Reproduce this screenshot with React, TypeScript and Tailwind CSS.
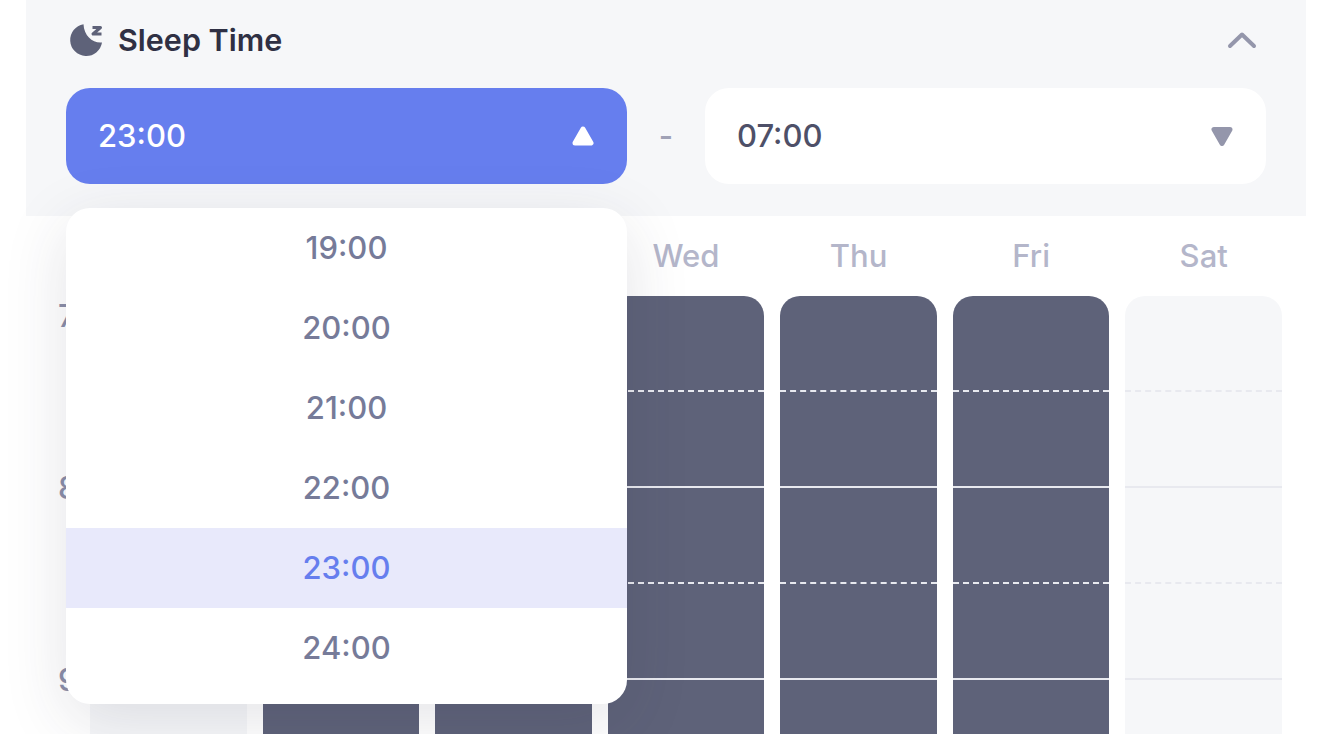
const days = ["Sun", "Mon", "Tue", "Wed", "Thu", "Fri", "Sat"];
const times = ["19:00", "20:00", "21:00", "22:00", "23:00", "24:00"];
const cells = [0, 1, 2, 3, 4];

function MoonIcon() {
  return (
    <svg width="34" height="34" viewBox="0 0 34 34" className="ml-[3px] mr-[15px] shrink-0">
      <path d="M14.5 1.2A16 16 0 1 0 33 19.5C24 20.5 15 13 14.5 1.2Z" fill="#5e6279" />
      <path
        d="M23.500 4.500H31.500L24 11H32.500"
        fill="none"
        stroke="#5e6279"
        strokeWidth="3"
        strokeLinejoin="round"
      />
    </svg>
  );
}

function Triangle({ up, color }: { up?: boolean; color: string }) {
  return (
    <svg width="24" height="20" viewBox="0 0 24 20" className={up ? "" : "rotate-180 translate-y-[0.5px]"}>
      <path d="M12 3L20 17H4Z" fill={color} stroke={color} strokeWidth="5" strokeLinejoin="round" />
    </svg>
  );
}

export default function App() {
  return (
    <div className="relative h-[734px] w-[1326px] overflow-hidden bg-white pl-[26px] pr-[20px] font-['Inter',sans-serif]">
      <section className="h-[216px] bg-[#f6f7f9] px-[40px]">
        <div className="flex h-[88px] items-center pb-[8px]">
          <MoonIcon />
          <h2 className="text-[30.500px] font-semibold text-[#2f3044]">Sleep Time</h2>
          <svg width="32" height="20" viewBox="0 0 32 20" className="ml-auto mr-[8px]">
            <path
              d="M4 16L16 4.500L28 16"
              fill="none"
              stroke="#9496ab"
              strokeWidth="4"
              strokeLinecap="round"
              strokeLinejoin="round"
            />
          </svg>
        </div>
        <div className="flex items-center">
          <button className="flex h-[96px] w-[561px] items-center justify-between rounded-[24px] bg-[#667eee] pl-[32px] pr-[32px] text-[31px] font-medium text-white">
            23:00
            <Triangle up color="#ffffff" />
          </button>
          <span className="w-[78px] text-center text-[31px] font-medium text-[#a0a2b6]">-</span>
          <button className="flex h-[96px] w-[561px] items-center justify-between rounded-[24px] bg-white pl-[32px] pr-[32px] text-[31px] font-medium text-[#4e5068]">
            07:00
            <Triangle color="#9496ab" />
          </button>
        </div>
      </section>

      <section className="flex">
        <div className="w-[64px] pl-[32px] pt-[80px] text-[31px] font-medium text-[#8b8ea8]">
          <div className="flex h-[40px] items-center">7</div>
          <div className="mt-[132px] flex h-[40px] items-center">8</div>
          <div className="mt-[152px] flex h-[40px] items-center">9</div>
        </div>
        <div className="grid w-[1192px] grid-cols-7 gap-x-[16px]">
          {days.map((day) => {
            const weekend = day === "Sun" || day === "Sat";
            return (
              <div key={day}>
                <div className="flex h-[80px] items-center justify-center text-[31px] font-medium text-[#b4b6ca]">
                  {day}
                </div>
                <div
                  className={
                    weekend
                      ? "overflow-hidden rounded-t-[20px] bg-[#f6f7f9]"
                      : "overflow-hidden rounded-t-[20px] bg-[#5e6279]"
                  }
                >
                  {cells.map((cell) => (
                    <div
                      key={cell}
                      className={
                        cell % 2 === 0
                          ? "h-[96px] border-b-2 border-dashed border-[#e8e9ef]"
                          : "h-[96px] border-b-2 border-solid border-[#e8e9ef]"
                      }
                    />
                  ))}
                </div>
              </div>
            );
          })}
        </div>
      </section>

      <ul className="absolute left-[66px] top-[208px] w-[561px] rounded-[24px] bg-white pb-[16px] shadow-[0_16px_64px_rgba(45,48,70,0.13)]">
        {times.map((time) => (
          <li
            key={time}
            className={
              time === "23:00"
                ? "flex h-[80px] items-center justify-center bg-[#e8e9fb] text-[31px] font-medium text-[#667eee]"
                : "flex h-[80px] items-center justify-center text-[31px] font-medium text-[#767b99]"
            }
          >
            {time}
          </li>
        ))}
      </ul>
    </div>
  );
}
